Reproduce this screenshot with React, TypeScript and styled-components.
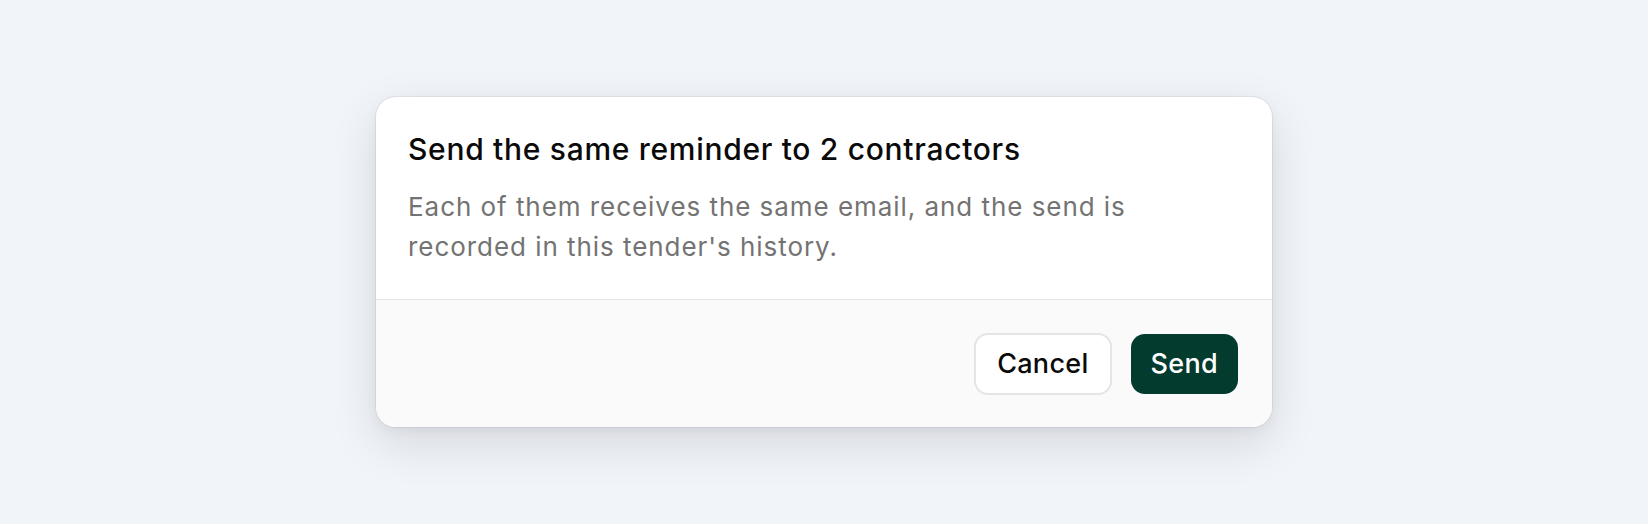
import React from "react";
import styled, { createGlobalStyle } from "styled-components";

const GlobalStyle = createGlobalStyle`
  html, body {
    margin: 0;
    padding: 0;
    background: #f1f4f8;
    font-family: Inter, "Noto Sans", "Liberation Sans", sans-serif;
  }
  * { box-sizing: border-box; }
`;

const Page = styled.div`
  width: 1648px;
  height: 524px;
  display: flex;
  align-items: center;
  justify-content: center;
  background: #f1f4f8;
`;

const Dialog = styled.div`
  width: 896px;
  background: #ffffff;
  border-radius: 20px;
  overflow: hidden;
  box-shadow: 0 0 0 1px rgba(15, 23, 42, 0.06), 0 16px 48px rgba(15, 23, 42, 0.12),
    0 4px 12px rgba(15, 23, 42, 0.05);
  display: flex;
  flex-direction: column;
`;

const Header = styled.div`
  padding: 32px 32px 32px;
  display: flex;
  flex-direction: column;
  gap: 18px;
`;

const Title = styled.h2`
  margin: 0;
  font-size: 30px;
  line-height: 40px;
  font-weight: 500;
  color: #0a0a0a;
  letter-spacing: 0.7px;
`;

const Description = styled.p`
  margin: 0;
  font-size: 26px;
  line-height: 40px;
  font-weight: 400;
  color: #737373;
  letter-spacing: 0.95px;
`;

const Footer = styled.div`
  background: #fafafa;
  border-top: 1px solid #e5e5e5;
  padding: 33px 34px 32px;
  display: flex;
  justify-content: flex-end;
  align-items: center;
  gap: 19px;
`;

const Button = styled.button<{ $primary?: boolean }>`
  font-family: Inter, "Noto Sans", "Liberation Sans", sans-serif;
  font-size: 27px;
  line-height: 36px;
  font-weight: 500;
  letter-spacing: 0.3px;
  border-radius: 14px;
  cursor: pointer;
  padding: ${(p) => (p.$primary ? "12px 20px" : "11px 21px")};
  border: ${(p) => (p.$primary ? "none" : "2px solid #e5e5e5")};
  background: ${(p) => (p.$primary ? "#033b2f" : "#ffffff")};
  color: ${(p) => (p.$primary ? "#ffffff" : "#0a0a0a")};
`;

export default function App() {
  return (
    <>
      <GlobalStyle />
      <Page>
        <Dialog role="dialog">
          <Header>
            <Title>Send the same reminder to 2 contractors</Title>
            <Description>
              Each of them receives the same email, and the send is recorded in this tender's history.
            </Description>
          </Header>
          <Footer>
            <Button>Cancel</Button>
            <Button $primary>Send</Button>
          </Footer>
        </Dialog>
      </Page>
    </>
  );
}
